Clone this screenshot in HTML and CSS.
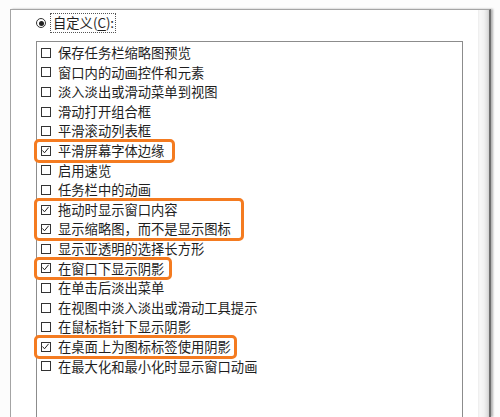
FILE: index.html
```html
<!DOCTYPE html>
<html lang="zh-CN">
<head>
<meta charset="utf-8">
<title>自定义视觉效果</title>
<link rel="stylesheet" href="styles.css">
</head>
<body>
<div class="frame">
  <div class="content">
    <div class="radio-row">
      <span class="radio"><span class="dot"></span></span>
      <span class="focus">自定义(<u>C</u>):</span>
    </div>
    <div class="list">
      <div class="row"><span class="cb"></span><span class="txt">保存任务栏缩略图预览</span></div>
      <div class="row"><span class="cb"></span><span class="txt">窗口内的动画控件和元素</span></div>
      <div class="row"><span class="cb"></span><span class="txt">淡入淡出或滑动菜单到视图</span></div>
      <div class="row"><span class="cb"></span><span class="txt">滑动打开组合框</span></div>
      <div class="row"><span class="cb"></span><span class="txt">平滑滚动列表框</span></div>
      <div class="hl hl-a">
        <div class="row"><span class="cb checked"><svg viewBox="0 0 9 9" width="9" height="9"><polyline points="1.5,4.5 3.5,6.8 7.6,1.8" fill="none" stroke="#222" stroke-width="1"/></svg></span><span class="txt">平滑屏幕字体边缘</span></div>
      </div>
      <div class="row"><span class="cb"></span><span class="txt">启用速览</span></div>
      <div class="row"><span class="cb"></span><span class="txt">任务栏中的动画</span></div>
      <div class="hl hl-b">
        <div class="row"><span class="cb checked"><svg viewBox="0 0 9 9" width="9" height="9"><polyline points="1.5,4.5 3.5,6.8 7.6,1.8" fill="none" stroke="#222" stroke-width="1"/></svg></span><span class="txt">拖动时显示窗口内容</span></div>
        <div class="row"><span class="cb checked"><svg viewBox="0 0 9 9" width="9" height="9"><polyline points="1.5,4.5 3.5,6.8 7.6,1.8" fill="none" stroke="#222" stroke-width="1"/></svg></span><span class="txt">显示缩略图，而不是显示图标</span></div>
      </div>
      <div class="row"><span class="cb"></span><span class="txt">显示亚透明的选择长方形</span></div>
      <div class="hl hl-c">
        <div class="row"><span class="cb checked"><svg viewBox="0 0 9 9" width="9" height="9"><polyline points="1.5,4.5 3.5,6.8 7.6,1.8" fill="none" stroke="#222" stroke-width="1"/></svg></span><span class="txt">在窗口下显示阴影</span></div>
      </div>
      <div class="row"><span class="cb"></span><span class="txt">在单击后淡出菜单</span></div>
      <div class="row"><span class="cb"></span><span class="txt">在视图中淡入淡出或滑动工具提示</span></div>
      <div class="row"><span class="cb"></span><span class="txt">在鼠标指针下显示阴影</span></div>
      <div class="hl hl-d">
        <div class="row"><span class="cb checked"><svg viewBox="0 0 9 9" width="9" height="9"><polyline points="1.5,4.5 3.5,6.8 7.6,1.8" fill="none" stroke="#222" stroke-width="1"/></svg></span><span class="txt">在桌面上为图标标签使用阴影</span></div>
      </div>
      <div class="row"><span class="cb"></span><span class="txt">在最大化和最小化时显示窗口动画</span></div>
    </div>
  </div>
  <div class="strip"></div>
</div>
</body>
</html>
```
FILE: styles.css
```css
html, body {
  margin: 0;
  padding: 0;
  background: #fcfcfc;
  height: 417px;
  overflow: hidden;
}
body {
  font-family: "Noto Sans CJK SC", "Noto Sans", sans-serif;
  font-size: 13.3px;
  color: #1e1e1e;
}
.frame {
  margin: 9px 0 0 10px;
  width: 478px;
  height: 407px;
  display: flex;
  background: #fff;
  border-top: 1px solid #a4a4a4;
  border-left: 1px solid #a4a4a4;
  border-right: 2px solid #6e6e6e;
  box-shadow: 2px 0 2px rgba(0, 0, 0, 0.3);
}
.content {
  flex: 1;
  display: flex;
  flex-direction: column;
  padding: 3px 0 0 25px;
}
.radio-row {
  display: flex;
  align-items: center;
  height: 20px;
}
.radio {
  width: 8px;
  height: 8px;
  border: 1px solid #333;
  border-radius: 50%;
  display: flex;
  align-items: center;
  justify-content: center;
  background: #fff;
}
.dot {
  width: 5px;
  height: 5px;
  border-radius: 50%;
  background: #222;
}
.focus {
  margin-left: 4px;
  height: 18px;
  line-height: 18px;
  padding: 0 1px 0 2px;
  border: 1px dotted #555;
}
.focus u {
  text-decoration-thickness: 1px;
  text-underline-offset: 2px;
}
.list {
  flex: 1;
  margin: 8px 15px 0 0;
  border: 1px solid #8c8c8c;
  border-bottom: none;
  padding-top: 1px;
  background: #fff;
}
.row {
  display: flex;
  align-items: center;
  height: 19.6px;
  padding-left: 4px;
  white-space: nowrap;
}
.cb {
  width: 8px;
  height: 8px;
  border: 1px solid #333;
  flex: none;
  position: relative;
}
.cb svg {
  position: absolute;
  left: -1px;
  top: -1px;
}
.txt {
  margin-left: 7px;
  line-height: 19.6px;
}
.hl {
  width: fit-content;
  margin-left: -1px;
  padding-left: 1px;
  outline: 3px solid #f47b20;
  outline-offset: -1px;
  border-radius: 3px;
}
.hl-a { padding-right: 9px; }
.hl-b { padding-right: 11px; }
.hl-c { padding-right: 6px; }
.hl-d { padding-right: 4px; }
.strip {
  width: 11px;
  background: linear-gradient(to right, #ececec 0, #f8f8f8 2px, #f2f2f2 6px, #e2e2e2 9px, #cfcfcf 11px);
}
```
